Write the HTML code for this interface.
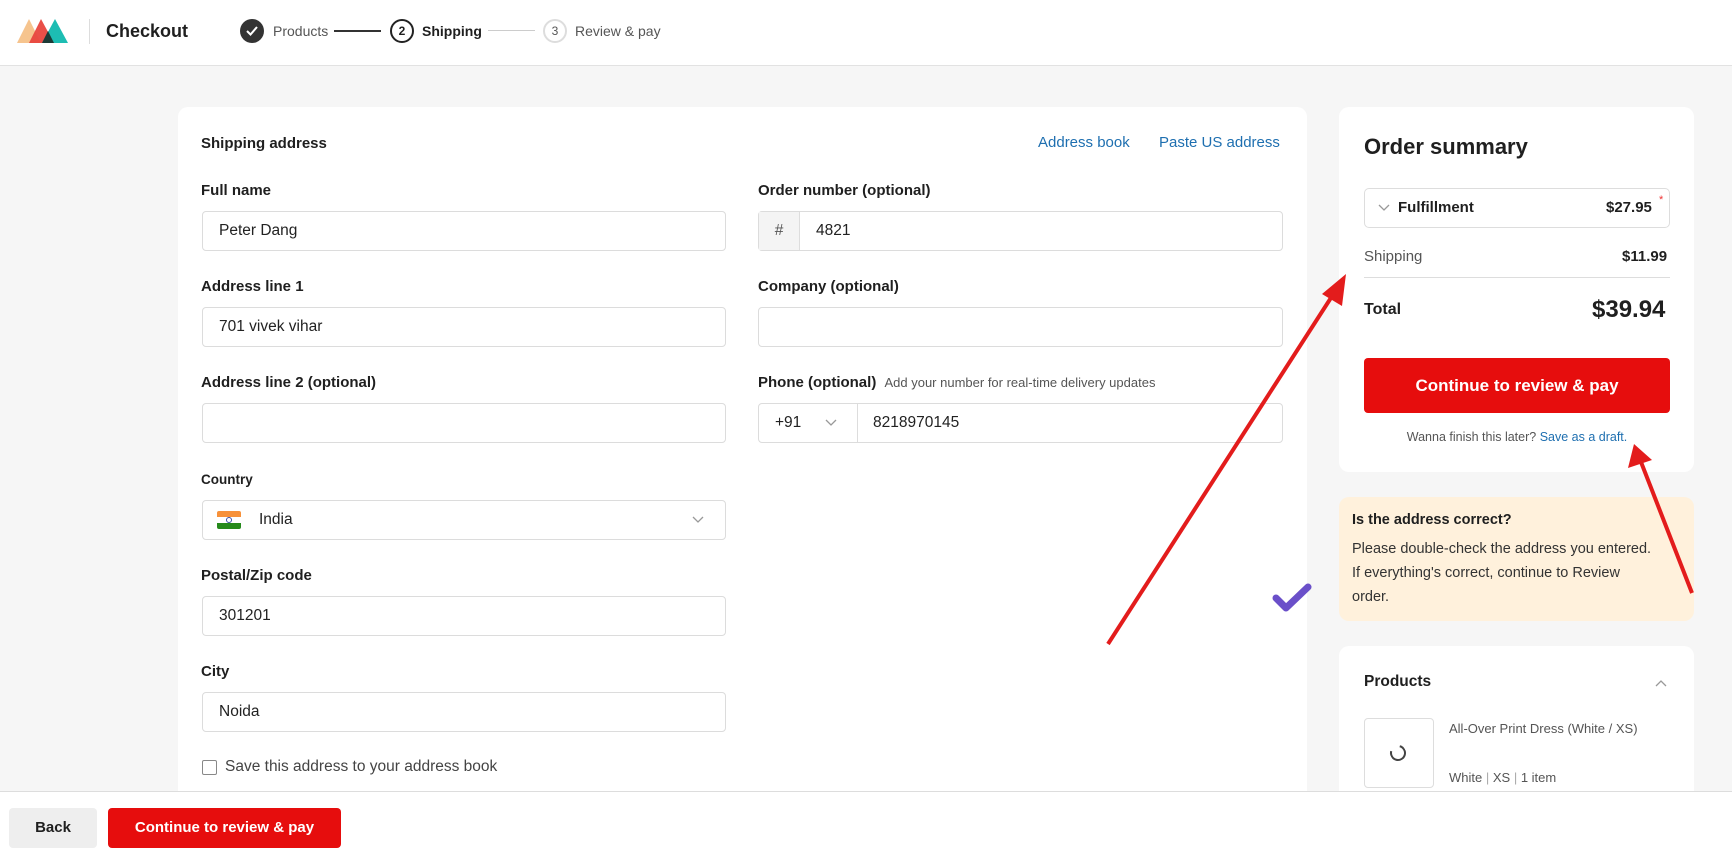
<!DOCTYPE html>
<html><head><meta charset="utf-8"><style>
*{box-sizing:border-box;margin:0;padding:0}
body{width:1732px;height:862px;overflow:hidden;background:#f6f6f6;font-family:"Liberation Sans",Arial,sans-serif;color:#1f1f1f;position:relative}
.a{position:absolute}
.hdr{left:0;top:0;width:1732px;height:66px;background:#fff;border-bottom:1px solid #e2e2e2}
.card{background:#fff;border-radius:10px}
.lbl{font-weight:bold;font-size:15px;color:#1f1f1f;white-space:nowrap}
.inp{border:1px solid #dcdcdc;border-radius:4px;height:40px;background:#fff;font-size:15.5px;line-height:38px;padding-left:16px;color:#222}
.lnk{color:#1e6fb0;font-size:15px}
.btn{background:#e60d0d;color:#fff;font-weight:bold;border-radius:4px;text-align:center}
</style></head><body>
<div class="a hdr"></div>
<svg class="a" style="left:17px;top:17px" width="56" height="27" viewBox="0 0 56 27">
<polygon points="0,26 12,2 24,26" fill="#f6c48e"/>
<polygon points="12,26 24,2 37,26" fill="#e8463e" opacity=".95"/>
<polygon points="25,26 38,2 51,26" fill="#1dbdb3"/>
<polygon points="25,26 31,14 37,26" fill="#1d3a36"/>
</svg>
<div class="a" style="left:89px;top:19px;width:1px;height:25px;background:#ddd"></div>
<div class="a" style="left:106px;top:21px;font-size:18px;font-weight:bold">Checkout</div>
<div class="a" style="left:240px;top:19px;width:24px;height:24px;border-radius:50%;background:#333"></div>
<svg class="a" style="left:245px;top:25px" width="14" height="12"><path d="M2 6 L5.5 9.5 L12 2" stroke="#fff" stroke-width="2" fill="none"/></svg>
<div class="a" style="left:273px;top:23px;font-size:14px;color:#555">Products</div>
<div class="a" style="left:334px;top:30px;width:47px;height:1.5px;background:#333"></div>
<div class="a" style="left:390px;top:19px;width:24px;height:24px;border-radius:50%;border:2px solid #222;font-size:12px;font-weight:bold;text-align:center;line-height:20px">2</div>
<div class="a" style="left:422px;top:23px;font-size:14px;font-weight:bold">Shipping</div>
<div class="a" style="left:488px;top:30px;width:47px;height:1px;background:#ccc"></div>
<div class="a" style="left:543px;top:19px;width:24px;height:24px;border-radius:50%;border:2px solid #ddd;font-size:12px;color:#555;text-align:center;line-height:20px">3</div>
<div class="a" style="left:575px;top:23px;font-size:14px;color:#555">Review &amp; pay</div>

<div class="a card" style="left:178px;top:107px;width:1129px;height:720px"></div>
<div class="a lbl" style="left:201px;top:135px">Shipping address</div>
<div class="a lnk" style="left:1038px;top:134px">Address book</div>
<div class="a lnk" style="left:1159px;top:134px">Paste US address</div>

<div class="a lbl" style="left:201px;top:182px">Full name</div>
<div class="a inp" style="left:202px;top:211px;width:524px">Peter Dang</div>
<div class="a lbl" style="left:201px;top:278px">Address line 1</div>
<div class="a inp" style="left:202px;top:307px;width:524px">701 vivek vihar</div>
<div class="a lbl" style="left:201px;top:374px">Address line 2 (optional)</div>
<div class="a inp" style="left:202px;top:403px;width:524px"></div>
<div class="a lbl" style="left:201px;top:472px;font-size:13.5px">Country</div>
<div class="a inp" style="left:202px;top:500px;width:524px;padding-left:56px">India</div>
<div class="a" style="left:217px;top:511px;width:24px;height:18px;border-radius:2px;overflow:hidden">
<div style="height:6px;background:#f7913a"></div><div style="height:6px;background:#fff;position:relative"><div style="position:absolute;left:9px;top:0;width:6px;height:6px;border-radius:50%;border:1px solid #3a4fa8"></div></div><div style="height:6px;background:#268a1c"></div></div>
<svg class="a" style="left:692px;top:516px" width="12" height="8"><path d="M1 1 L6 6 L11 1" stroke="#999" stroke-width="1.3" fill="none"/></svg>
<div class="a lbl" style="left:201px;top:567px">Postal/Zip code</div>
<div class="a inp" style="left:202px;top:596px;width:524px">301201</div>
<div class="a lbl" style="left:201px;top:663px">City</div>
<div class="a inp" style="left:202px;top:692px;width:524px">Noida</div>
<div class="a" style="left:202px;top:760px;width:15px;height:15px;border:1px solid #888;border-radius:2px;background:#fff"></div>
<div class="a" style="left:225px;top:758px;font-size:15.5px;color:#444">Save this address to your address book</div>

<div class="a lbl" style="left:758px;top:182px">Order number (optional)</div>
<div class="a inp" style="left:758px;top:211px;width:525px;padding-left:0"><span style="display:inline-block;width:41px;text-align:center;background:#f4f4f4;border-right:1px solid #ddd;color:#555">#</span><span style="padding-left:16px">4821</span></div>
<div class="a lbl" style="left:758px;top:278px">Company (optional)</div>
<div class="a inp" style="left:758px;top:307px;width:525px"></div>
<div class="a lbl" style="left:758px;top:374px">Phone (optional) <span style="font-weight:normal;font-size:13px;color:#555;margin-left:4px">Add your number for real-time delivery updates</span></div>
<div class="a inp" style="left:758px;top:403px;width:525px;padding-left:0"><span style="display:inline-block;width:99px;border-right:1px solid #ddd;padding-left:16px">+91</span><span style="padding-left:15px">8218970145</span></div>
<svg class="a" style="left:825px;top:419px" width="12" height="8"><path d="M1 1 L6 6 L11 1" stroke="#999" stroke-width="1.3" fill="none"/></svg>

<div class="a card" style="left:1339px;top:107px;width:355px;height:365px"></div>
<div class="a" style="left:1364px;top:134px;font-size:22px;font-weight:bold">Order summary</div>
<div class="a" style="left:1364px;top:188px;width:306px;height:40px;border:1px solid #ddd;border-radius:5px"></div>
<svg class="a" style="left:1378px;top:204px" width="12" height="8"><path d="M1 1 L6 6 L11 1" stroke="#999" stroke-width="1.3" fill="none"/></svg>
<div class="a" style="left:1398px;top:199px;font-size:15px;font-weight:bold">Fulfillment</div>
<div class="a" style="left:1606px;top:199px;font-size:15px;font-weight:bold">$27.95</div>
<div class="a" style="left:1659px;top:194px;font-size:11px;color:#e33">*</div>
<div class="a" style="left:1364px;top:248px;font-size:15px;color:#555">Shipping</div>
<div class="a" style="left:1622px;top:248px;font-size:15px;font-weight:bold">$11.99</div>
<div class="a" style="left:1364px;top:277px;width:306px;height:1px;background:#ddd"></div>
<div class="a" style="left:1364px;top:301px;font-size:16px;font-weight:bold">Total</div>
<div class="a" style="left:1592px;top:296px;font-size:24px;font-weight:bold">$39.94</div>
<div class="a btn" style="left:1364px;top:358px;width:306px;height:55px;line-height:55px;font-size:17px">Continue to review &amp; pay</div>
<div class="a" style="left:1364px;top:430px;width:306px;text-align:center;font-size:12.5px;color:#555">Wanna finish this later? <span style="color:#1e6fb0">Save as a draft.</span></div>

<div class="a" style="left:1339px;top:497px;width:355px;height:124px;background:#fff1dc;border-radius:10px"></div>
<div class="a" style="left:1352px;top:512px;font-size:14.5px;font-weight:bold">Is the address correct?</div>
<div class="a" style="left:1352px;top:537px;width:340px;font-size:14.5px;line-height:24px;color:#333;white-space:nowrap">Please double-check the address you entered.<br>If everything's correct, continue to Review<br>order.</div>

<div class="a card" style="left:1339px;top:646px;width:355px;height:200px"></div>
<div class="a" style="left:1364px;top:673px;font-size:15.5px;font-weight:bold">Products</div>
<svg class="a" style="left:1655px;top:679px" width="12" height="8"><path d="M1 7 L6 2 L11 7" stroke="#999" stroke-width="1.3" fill="none"/></svg>
<div class="a" style="left:1364px;top:718px;width:70px;height:70px;border:1px solid #ddd;border-radius:4px"></div>
<div class="a" style="left:1390px;top:745px;width:16px;height:16px;border-radius:50%;border:2px solid #444;border-top-color:transparent;transform:rotate(-30deg)"></div>
<div class="a" style="left:1449px;top:721px;font-size:13px;color:#555">All-Over Print Dress (White / XS)</div>
<div class="a" style="left:1449px;top:770px;font-size:13px;color:#555">White <span style="color:#aaa">|</span> XS <span style="color:#aaa">|</span> 1 item</div>

<div class="a" style="left:0;top:791px;width:1732px;height:71px;background:#fff;border-top:1px solid #ddd"></div>
<div class="a" style="left:9px;top:808px;width:88px;height:40px;background:#eee;border-radius:4px;text-align:center;line-height:40px;font-weight:bold;font-size:15px">Back</div>
<div class="a btn" style="left:108px;top:808px;width:233px;height:40px;line-height:40px;font-size:15px">Continue to review &amp; pay</div>

<svg class="a" style="left:0;top:0" width="1732" height="862">
<line x1="1108" y1="644" x2="1336" y2="290" stroke="#e31c1c" stroke-width="4"/>
<polygon points="1346,274 1322,294 1342,306" fill="#e31c1c"/>
<line x1="1692" y1="593" x2="1641" y2="462" stroke="#e31c1c" stroke-width="4"/>
<polygon points="1634,444 1628,468 1652,460" fill="#e31c1c"/>
<path d="M1276 598 L1286 608 L1308 587" stroke="#6a4fc9" stroke-width="7" fill="none" stroke-linecap="round" stroke-linejoin="round"/>
</svg>
</body></html>
